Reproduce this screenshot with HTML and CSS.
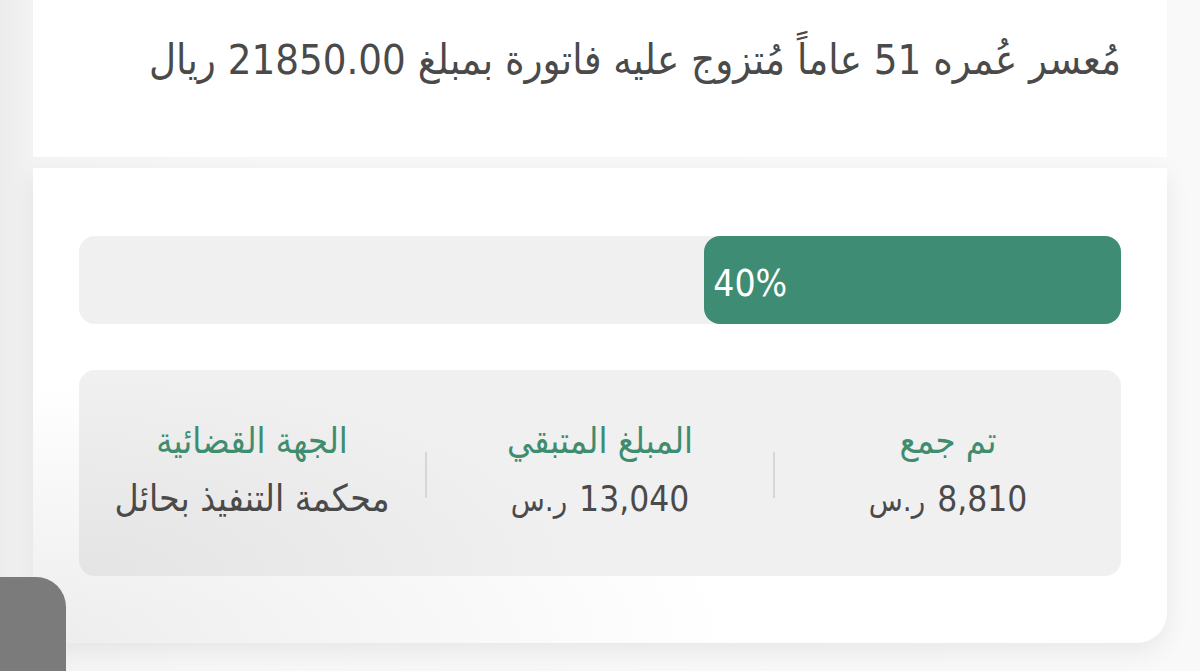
FILE: index.html
```html
<!DOCTYPE html>
<html lang="ar" dir="rtl">
<head>
<meta charset="utf-8">
<link rel="stylesheet" href="styles.css">
</head>
<body>
<div class="page">
  <section class="card card-top">
    <p class="desc">مُعسر عُمره 51 عاماً مُتزوج عليه فاتورة بمبلغ 21850.00 ريال</p>
  </section>
  <section class="card card-main">
    <div class="progress">
      <div class="progress-fill" style="width:40%"><span class="pct">40%</span></div>
    </div>
    <div class="stats">
      <div class="stat">
        <div class="stat-label">تم جمع</div>
        <div class="stat-value"><span class="num">8,810</span><span class="cur">ر.س</span></div>
      </div>
      <div class="divider"></div>
      <div class="stat">
        <div class="stat-label">المبلغ المتبقي</div>
        <div class="stat-value"><span class="num">13,040</span><span class="cur">ر.س</span></div>
      </div>
      <div class="divider"></div>
      <div class="stat">
        <div class="stat-label">الجهة القضائية</div>
        <div class="stat-value"><span class="court">محكمة التنفيذ بحائل</span></div>
      </div>
    </div>
  </section>
  <div class="corner-block"></div>
</div>
</body>
</html>
```
FILE: styles.css
```css
html, body {
  margin: 0;
  padding: 0;
}
*, *::before, *::after {
  box-sizing: border-box;
}
body {
  width: 1200px;
  height: 671px;
  overflow: hidden;
  font-family: "DejaVu Sans Condensed", "DejaVu Sans", sans-serif;
  background: linear-gradient(to right, #ececec 0px, #f4f4f4 40px, #f7f7f7 200px, #f9f9f9 100%);
}
.page {
  position: relative;
  width: 1200px;
  height: 671px;
  display: flex;
  flex-direction: column;
  padding: 0 33px;
}
.card {
  background: #fff;
  flex-shrink: 0;
}
.card-top {
  height: 157px;
  display: flex;
  align-items: flex-start;
  padding: 0 46px;
  margin-bottom: 11px;
}
.desc {
  margin: 32px 0 0 0;
  font-size: 41.5px;
  line-height: 56px;
  color: #4a4a4a;
  white-space: nowrap;
}
.card-main {
  height: 475px;
  padding: 68px 46px 0 46px;
  border-radius: 0 0 30px 30px;
  background:
    radial-gradient(ellipse 700px 260px at 0% 100%, #ededed 0%, rgba(255,255,255,0) 100%),
    #fff;
  box-shadow: 0 8px 26px rgba(0,0,0,0.07);
}
.progress {
  height: 88px;
  background: #f0f0f0;
  border-radius: 16px;
  display: flex;
}
.progress-fill {
  height: 100%;
  background: #3f8c74;
  border-radius: 16px;
  display: flex;
  align-items: center;
  justify-content: flex-end;
  padding-left: 9px;
}
.pct {
  color: #fff;
  font-size: 37px;
  direction: ltr;
  margin-top: 6px;
}
.stats {
  margin-top: 46px;
  height: 206px;
  border-radius: 16px;
  background:
    radial-gradient(ellipse 500px 200px at 0% 100%, #e4e4e4 0%, rgba(240,240,240,0) 100%),
    #f0f0f0;
  display: flex;
  align-items: center;
  padding-top: 4px;
}
.stat {
  flex: 1;
  text-align: center;
}
.stat-label {
  color: #3f8c6e;
  font-size: 36px;
  line-height: 46px;
}
.stat-value {
  color: #4a4a4a;
  line-height: 52px;
  margin-top: 9px;
  white-space: nowrap;
}
.num {
  font-size: 35px;
}
.cur {
  font-size: 31px;
  margin-inline-end: 0;
  margin-right: 0;
  padding-right: 12px;
  display: inline-block;
}
.court {
  font-size: 37px;
}
.divider {
  width: 2px;
  height: 46px;
  background: #d6d6d6;
}
.corner-block {
  position: absolute;
  left: 0;
  top: 577px;
  width: 66px;
  height: 94px;
  background: #7b7b7b;
  border-top-right-radius: 30px;
}
```
